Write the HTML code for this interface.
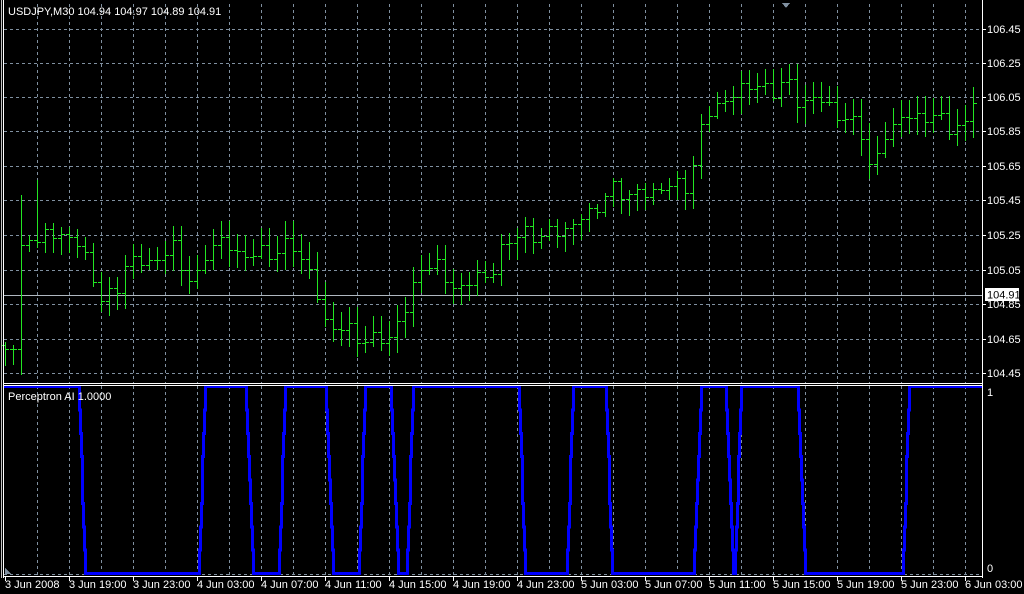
<!DOCTYPE html>
<html><head><meta charset="utf-8">
<style>
html,body{margin:0;padding:0;background:#000;}
body{width:1024px;height:594px;overflow:hidden;position:relative;font-family:"Liberation Sans",sans-serif;}
svg{position:absolute;left:0;top:0;}
text{font-family:"Liberation Sans",sans-serif;font-size:11px;fill:#fff;}
</style></head>
<body>
<svg id="s" width="1024" height="594" viewBox="0 0 1024 594" xmlns="http://www.w3.org/2000/svg" shape-rendering="crispEdges">
<rect width="1024" height="594" fill="#000"/>
<g id="grid" stroke="#8090a0" stroke-width="1" stroke-dasharray="3,3"></g>
<line x1="4" y1="295.5" x2="982" y2="295.5" stroke="#b0b8c0" stroke-width="1"/>
<g id="bars" stroke="#22e622" stroke-width="1"></g>
<polyline id="blue" fill="none" stroke="#0000ff" stroke-width="3"/>
<line x1="1.5" y1="0" x2="1.5" y2="578" stroke="#c0c0c0"/>
<line x1="3.5" y1="0" x2="3.5" y2="578" stroke="#fff"/>
<line x1="982.5" y1="0" x2="982.5" y2="578" stroke="#fff"/>
<line x1="4" y1="383.5" x2="983" y2="383.5" stroke="#fff"/>
<line x1="4" y1="385.5" x2="983" y2="385.5" stroke="#fff"/>
<line x1="4" y1="576.5" x2="983" y2="576.5" stroke="#fff"/>
<g id="ticks" stroke="#fff"></g>
<g id="labels"></g>
<text x="8" y="15">USDJPY,M30  104.94 104.97 104.89 104.91</text>
<text x="8" y="400">Perceptron AI 1.0000</text>
<rect x="985" y="288" width="34" height="13" fill="#fff"/>
<text x="987" y="298.5" style="fill:#000">104.91</text>
<text x="987" y="396">1</text>
<text x="987" y="572">0</text>
<polygon points="782,3 790,3 786,8" fill="#8090a0"/>
<polygon points="5,568 5,574 11,574" fill="#8090a0"/>
</svg>
<script>
var NS="http://www.w3.org/2000/svg";
function el(p,t,a,txt){var e=document.createElementNS(NS,t);for(var k in a)e.setAttribute(k,a[k]);if(txt)e.textContent=txt;p.appendChild(e);return e;}
var g=document.getElementById('grid');
for(var x=37;x<982;x+=32){el(g,'line',{x1:x+.5,y1:4,x2:x+.5,y2:383});el(g,'line',{x1:x+.5,y1:386,x2:x+.5,y2:575});}
var hy=[29,63,97,131,166,200,235,270,304,339,373],pl=["106.45","106.25","106.05","105.85","105.65","105.45","105.25","105.05","104.85","104.65","104.45"];
var lab=document.getElementById('labels'),tk=document.getElementById('ticks');
hy.forEach(function(y,i){el(g,'line',{x1:4,y1:y+.5,x2:982,y2:y+.5});el(tk,'line',{x1:983,y1:y+.5,x2:986,y2:y+.5});el(lab,'text',{x:987,y:y+4},pl[i]);});
el(g,'line',{x1:4,y1:574.5,x2:982,y2:574.5});
var tl=["3 Jun 2008","3 Jun 19:00","3 Jun 23:00","4 Jun 03:00","4 Jun 07:00","4 Jun 11:00","4 Jun 15:00","4 Jun 19:00","4 Jun 23:00","5 Jun 03:00","5 Jun 07:00","5 Jun 11:00","5 Jun 15:00","5 Jun 19:00","5 Jun 23:00","6 Jun 03:00"];
tl.forEach(function(t,i){var x=5+64*i;el(tk,'line',{x1:x+.5,y1:577,x2:x+.5,y2:581});el(lab,'text',{x:x,y:588},t);});
var kp=[[5,345],[13,345],[21,255],[29,235],[40,238],[60,233],[75,240],[90,268],[100,297],[115,298],[122,262],[140,263],[160,258],[172,245],[186,275],[196,283],[205,255],[215,238],[240,255],[270,252],[295,245],[310,275],[325,322],[345,330],[370,342],[390,335],[405,310],[420,265],[440,268],[460,295],[475,270],[490,282],[505,237],[530,235],[560,232],[590,213],[610,190],[640,195],[670,185],[685,185],[695,160],[702,128],[712,100],[725,105],[740,85],[755,85],[770,92],[785,78],[795,100],[810,100],[825,100],[840,118],[860,126],[872,178],[885,133],[900,118],[930,115],[950,125],[965,128],[975,90]];
function interp(x){for(var i=0;i<kp.length-1;i++){if(x<=kp[i+1][0]){var a=kp[i],b=kp[i+1];return a[1]+(b[1]-a[1])*(x-a[0])/(b[0]-a[0]);}}return kp[kp.length-1][1];}
var b=document.getElementById('bars');var prev=interp(5);
for(var i=0;i<122;i++){var x=5+8*i;var c=interp(x)+Math.sin(i*2.3)*6+Math.cos(i*1.7)*4;
var o=prev;var hi=Math.min(o,c)-3-Math.abs(Math.sin(i*3.1))*14;var lo=Math.max(o,c)+3+Math.abs(Math.cos(i*2.7))*14;
if(i==2){hi=195;lo=375;} if(i==4){hi=180;}
hi=Math.max(hi,20);lo=Math.min(lo,378);
el(b,'line',{x1:x+.5,y1:Math.round(hi),x2:x+.5,y2:Math.round(lo)});
el(b,'line',{x1:x-3,y1:Math.round(o)+.5,x2:x,y2:Math.round(o)+.5});
el(b,'line',{x1:x+1,y1:Math.round(c)+.5,x2:x+4,y2:Math.round(c)+.5});prev=c;}
var T=386.5,B=573.5;var tr=[[78,85,-1],[198,205,1],[245,253,-1],[278,285,1],[325,333,-1],[358,365,1],[390,398,-1],[406,413,1],[518,525,-1],[566,573,1],[605,612,-1],[693,701,1],[725,733,-1],[734,741,1],[797,805,-1],[902,909,1]];
var pts=[[4,T]];
tr.forEach(function(t){var a=t[0],e=t[1],d=t[2];var n=8;for(var k=0;k<=n;k++){var xx=d<0?a+(e-a)*k/n:e-(e-a)*(n-k)/n;var xr=Math.round(xx)+.5;var y0=d<0?T+(B-T)*k/n:B-(B-T)*k/n;
if(k==0){pts.push([xr,d<0?T:B]);}else{var yp=d<0?T+(B-T)*(k-1)/n:B-(B-T)*(k-1)/n;pts.push([xr,yp]);pts.push([xr,y0]);}}});
pts.push([982,T]);
document.getElementById('blue').setAttribute('points',pts.map(function(p){return p[0]+','+p[1].toFixed(1)}).join(' '));
</script>
</body></html>
